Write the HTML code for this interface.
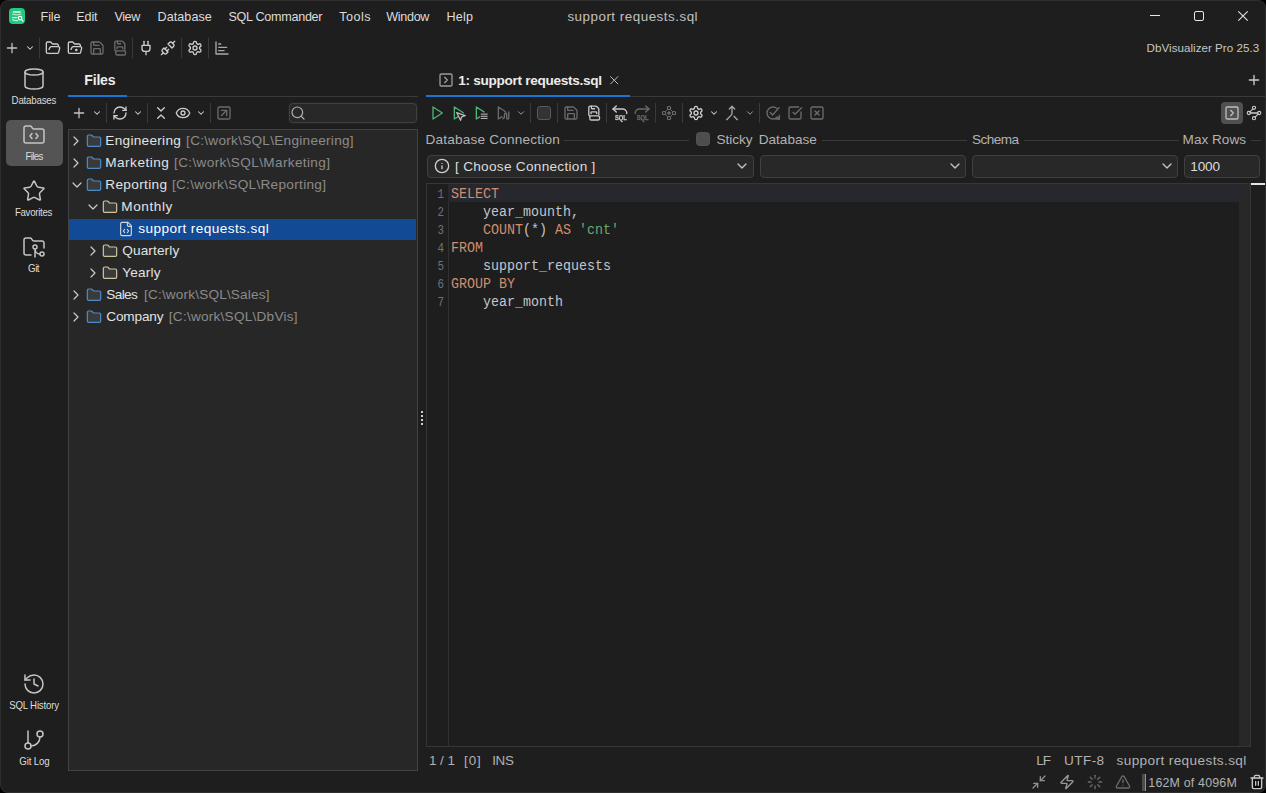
<!DOCTYPE html>
<html>
<head>
<meta charset="utf-8">
<title>support requests.sql</title>
<style>
*{box-sizing:border-box;margin:0;padding:0}
html,body{width:1266px;height:793px;overflow:hidden;background:#000}
body{font-family:"Liberation Sans",sans-serif;font-size:13px;color:#dcdcdc;position:relative}
#win{position:absolute;left:0;top:0;width:1266px;height:793px;background:#1e1e1e;border-radius:8px;overflow:hidden}
#frame{position:absolute;left:0;top:0;width:1266px;height:793px;border:1px solid #2e2e2e;border-radius:8px;pointer-events:none}
.a{position:absolute}
.t{position:absolute;white-space:nowrap;line-height:16px;height:16px}
svg{position:absolute;overflow:visible}
.code{position:absolute;left:451px;height:18px;transform:scaleY(1.1);transform-origin:0 12.55px;font-family:"Liberation Mono",monospace;font-size:13.33px;line-height:18px;white-space:pre}
.ln{position:absolute;left:428px;width:16px;height:18px;text-align:right;font-family:"Liberation Mono",monospace;font-size:12.6px;line-height:18px;color:#6f737a;transform:scaleX(.86);transform-origin:100% 50%}
</style>
</head>
<body>
<div id="win">
<!-- title bar -->
<div class="a" style="left:9px;top:8px;width:16px;height:16px;border-radius:4px;background:#23c881"></div>
<svg style="left:9px;top:8px" width="16" height="16" viewBox="0 0 16 16" fill="none" stroke="#fff" stroke-linecap="round"><path d="M4.500 4.100h6.700" stroke-width="1.500" stroke="#e6fcf2"/><path d="M3.600 6.200q4.200 1.700 8.400 0" stroke-width="1" stroke="#bff3dc"/><path d="M3.600 9.600h4.300" stroke-width="1.100" stroke="#d9f9ea"/><path d="M3.600 11.700q2.300 1.100 5.200 .9" stroke-width="1.100" stroke="#c4f4de"/><circle cx="11.100" cy="10.100" r="1.750" stroke-width="1.100"/><path d="M12.500 11.500l1.500 1.700" stroke-width="1.200"/></svg>
<div class="t" id="m_file" style="left:40.50px;top:8.63px;font-size:12.6px;color:#dcdcdc;letter-spacing:-0.063px;">File</div>
<div class="t" id="m_edit" style="left:76.30px;top:8.63px;font-size:12.6px;color:#dcdcdc;letter-spacing:-0.134px;">Edit</div>
<div class="t" id="m_view" style="left:114.40px;top:8.63px;font-size:12.6px;color:#dcdcdc;letter-spacing:-0.391px;">View</div>
<div class="t" id="m_db" style="left:157.60px;top:8.63px;font-size:12.6px;color:#dcdcdc;letter-spacing:0.042px;">Database</div>
<div class="t" id="m_sql" style="left:228.40px;top:8.63px;font-size:12.6px;color:#dcdcdc;letter-spacing:-0.283px;">SQL Commander</div>
<div class="t" id="m_tools" style="left:339.30px;top:8.63px;font-size:12.6px;color:#dcdcdc;letter-spacing:0.449px;">Tools</div>
<div class="t" id="m_win" style="left:386.30px;top:8.63px;font-size:12.6px;color:#dcdcdc;letter-spacing:-0.339px;">Window</div>
<div class="t" id="m_help" style="left:446.40px;top:8.63px;font-size:12.6px;color:#dcdcdc;letter-spacing:0.201px;">Help</div>
<div class="t" id="title" style="left:567.40px;top:9.36px;font-size:13.4px;color:#c2c2c2;letter-spacing:0.505px;">support requests.sql</div>
<div class="a" style="left:1150px;top:15px;width:10px;height:1px;background:#e8e8e8"></div>
<div class="a" style="left:1194px;top:11px;width:10px;height:10px;border:1px solid #e8e8e8;border-radius:2px"></div>
<svg style="left:1238px;top:11px" width="10" height="10" viewBox="0 0 10 10"><path d="M.3 .3l9.400 9.400M9.700 .3l-9.400 9.400" stroke="#e8e8e8" stroke-width="1.050" fill="none"/></svg>
<div class="t" id="ver" style="left:1146.60px;top:39.98px;font-size:11.6px;color:#c6c6c6;letter-spacing:0.031px;">DbVisualizer Pro 25.3</div>
<!-- main toolbar -->
<svg style="left:4px;top:40px;color:#c4c4c4" width="16" height="16" viewBox="0 0 24 24" fill="none" stroke="#c4c4c4" stroke-width="1.9" stroke-linecap="round" stroke-linejoin="round"><path d="M5 12h14M12 5v14"/></svg>
<svg style="left:25px;top:42.6px;color:#d4d4d4" width="10" height="10" viewBox="0 0 24 24" fill="none" stroke="#d4d4d4" stroke-width="2.5" stroke-linecap="round" stroke-linejoin="round"><path d="m6 9 6 6 6-6"/></svg>
<div class="a" style="left:39px;top:38px;width:1px;height:20px;background:#3a3a3a;"></div>
<svg style="left:45px;top:40px;color:#cdcdcd" width="16" height="16" viewBox="0 0 24 24" fill="none" stroke="#cdcdcd" stroke-width="2.0" stroke-linecap="round" stroke-linejoin="round"><path d="m6 14 1.5-2.9A2 2 0 0 1 9.24 10H20a2 2 0 0 1 1.94 2.5l-1.54 6a2 2 0 0 1-1.95 1.5H4a2 2 0 0 1-2-2V5a2 2 0 0 1 2-2h3.9a2 2 0 0 1 1.69.9l.81 1.2a2 2 0 0 0 1.67.9H18a2 2 0 0 1 2 2v2"/></svg>
<svg style="left:67px;top:40px;color:#cdcdcd" width="16" height="16" viewBox="0 0 24 24" fill="none" stroke="#cdcdcd" stroke-width="2.0" stroke-linecap="round" stroke-linejoin="round"><path d="m6 14 1.5-2.9A2 2 0 0 1 9.24 10H20a2 2 0 0 1 1.94 2.5l-1.54 6a2 2 0 0 1-1.95 1.5H4a2 2 0 0 1-2-2V5a2 2 0 0 1 2-2h3.9a2 2 0 0 1 1.69.9l.81 1.2a2 2 0 0 0 1.67.9H18a2 2 0 0 1 2 2v2"/><circle cx="14" cy="15" r="1"/></svg>
<svg style="left:89px;top:40px;color:#6b6b6b" width="16" height="16" viewBox="0 0 24 24" fill="none" stroke="#6b6b6b" stroke-width="2.0" stroke-linecap="round" stroke-linejoin="round"><path d="M15.2 3a2 2 0 0 1 1.4.6l3.8 3.8a2 2 0 0 1 .6 1.4V19a2 2 0 0 1-2 2H5a2 2 0 0 1-2-2V5a2 2 0 0 1 2-2z"/><path d="M17 21v-7a1 1 0 0 0-1-1H8a1 1 0 0 0-1 1v7"/><path d="M7 3v4a1 1 0 0 0 1 1h7"/></svg>
<svg style="left:112.1px;top:40px;color:#6b6b6b" width="16" height="16" viewBox="0 0 24 24" fill="none" stroke="#6b6b6b" stroke-width="2.0" stroke-linecap="round" stroke-linejoin="round"><path d="M6.200 16.500a2 2 0 0 1-2-2V3.600a2 2 0 0 1 2-2h8.400a2 2 0 0 1 1.400.600l2.600 2.600a2 2 0 0 1 .600 1.400v8.800"/><path d="M8 1.600v3a1 1 0 0 0 1 1h4"/><path d="M7.600 13v-1.600a1 1 0 0 1 1-1h6.400a1 1 0 0 1 1 1v1.600"/><rect x="5.700" y="16.300" width="14.600" height="6.200" rx="2.300"/></svg>
<div class="a" style="left:132px;top:38px;width:1px;height:20px;background:#3a3a3a;"></div>
<svg style="left:138px;top:40px;color:#cdcdcd" width="16" height="16" viewBox="0 0 24 24" fill="none" stroke="#cdcdcd" stroke-width="2.0" stroke-linecap="round" stroke-linejoin="round"><path d="M12 22v-5"/><path d="M9 8V2"/><path d="M15 8V2"/><path d="M18 8v5a4 4 0 0 1-4 4h-4a4 4 0 0 1-4-4V8Z"/></svg>
<svg style="left:160.3px;top:40px;color:#cdcdcd" width="16" height="16" viewBox="0 0 24 24" fill="none" stroke="#cdcdcd" stroke-width="2.0" stroke-linecap="round" stroke-linejoin="round"><path d="m19 5 3-3"/><path d="m2 22 3-3"/><path d="M6.3 20.3a2.4 2.4 0 0 0 3.4 0L12 18l-6-6-2.3 2.3a2.4 2.4 0 0 0 0 3.4Z"/><path d="M7.5 13.5 10 11"/><path d="M10.5 16.5 13 14"/><path d="m12 6 6 6 2.3-2.3a2.4 2.4 0 0 0 0-3.4l-2.6-2.6a2.4 2.4 0 0 0-3.4 0Z"/></svg>
<div class="a" style="left:181px;top:38px;width:1px;height:20px;background:#3a3a3a;"></div>
<svg style="left:187px;top:40px;color:#cdcdcd" width="16" height="16" viewBox="0 0 24 24" fill="none" stroke="#cdcdcd" stroke-width="2.0" stroke-linecap="round" stroke-linejoin="round"><path d="M12.22 2h-.44a2 2 0 0 0-2 2v.18a2 2 0 0 1-1 1.73l-.43.25a2 2 0 0 1-2 0l-.15-.08a2 2 0 0 0-2.73.73l-.22.38a2 2 0 0 0 .73 2.73l.15.1a2 2 0 0 1 1 1.72v.51a2 2 0 0 1-1 1.74l-.15.09a2 2 0 0 0-.73 2.73l.22.38a2 2 0 0 0 2.73.73l.15-.08a2 2 0 0 1 2 0l.43.25a2 2 0 0 1 1 1.73V20a2 2 0 0 0 2 2h.44a2 2 0 0 0 2-2v-.18a2 2 0 0 1 1-1.73l.43-.25a2 2 0 0 1 2 0l.15.08a2 2 0 0 0 2.73-.73l.22-.39a2 2 0 0 0-.73-2.73l-.15-.08a2 2 0 0 1-1-1.74v-.5a2 2 0 0 1 1-1.74l.15-.09a2 2 0 0 0 .73-2.73l-.22-.38a2 2 0 0 0-2.73-.73l-.15.08a2 2 0 0 1-2 0l-.43-.25a2 2 0 0 1-1-1.73V4a2 2 0 0 0-2-2z"/><circle cx="12" cy="12" r="3"/></svg>
<div class="a" style="left:208px;top:38px;width:1px;height:20px;background:#3a3a3a;"></div>
<svg style="left:213.7px;top:40px;color:#a9a9a9" width="16" height="16" viewBox="0 0 24 24" fill="none" stroke="#a9a9a9" stroke-width="2.0" stroke-linecap="round" stroke-linejoin="round"><path d="M3 3v18h18"/><path d="M7 16h8"/><path d="M7 11h12"/><path d="M7 6h3"/></svg>
<!-- sidebar -->
<div class="a" style="left:6px;top:120px;width:57px;height:46px;background:#545454;border-radius:5px"></div>
<svg style="left:22px;top:67px;color:#c4c4c4" width="24" height="24" viewBox="0 0 24 24" fill="none" stroke="#c4c4c4" stroke-width="1.5" stroke-linecap="round" stroke-linejoin="round"><ellipse cx="12" cy="5" rx="9" ry="3"/><path d="M3 5v14a9 3 0 0 0 18 0V5"/></svg>
<svg style="left:22px;top:123px;color:#c4c4c4" width="24" height="24" viewBox="0 0 24 24" fill="none" stroke="#c4c4c4" stroke-width="1.5" stroke-linecap="round" stroke-linejoin="round"><path d="M20 20a2 2 0 0 0 2-2V8a2 2 0 0 0-2-2h-7.9a2 2 0 0 1-1.69-.9L9.6 3.9A2 2 0 0 0 7.93 3H4a2 2 0 0 0-2 2v13a2 2 0 0 0 2 2Z"/><path d="M10 10.5 8 13l2 2.5"/><path d="m14 10.5 2 2.5-2 2.5"/></svg>
<svg style="left:22px;top:179px;color:#c4c4c4" width="24" height="24" viewBox="0 0 24 24" fill="none" stroke="#c4c4c4" stroke-width="1.5" stroke-linecap="round" stroke-linejoin="round"><path d="M11.525 2.295a.53.53 0 0 1 .95 0l2.31 4.679a2.123 2.123 0 0 0 1.595 1.16l5.166.756a.53.53 0 0 1 .294.904l-3.736 3.638a2.123 2.123 0 0 0-.611 1.878l.882 5.14a.53.53 0 0 1-.771.56l-4.618-2.428a2.122 2.122 0 0 0-1.973 0L6.396 21.01a.53.53 0 0 1-.77-.56l.881-5.139a2.122 2.122 0 0 0-.611-1.879L2.16 9.795a.53.53 0 0 1 .294-.906l5.165-.755a2.122 2.122 0 0 0 1.597-1.16z"/></svg>
<svg style="left:22px;top:235px;color:#c4c4c4" width="24" height="24" viewBox="0 0 24 24" fill="none" stroke="#c4c4c4" stroke-width="1.5" stroke-linecap="round" stroke-linejoin="round"><path d="M9 20H4a2 2 0 0 1-2-2V5a2 2 0 0 1 2-2h3.9a2 2 0 0 1 1.69.9l.81 1.2a2 2 0 0 0 1.67.9H20a2 2 0 0 1 2 2v5"/><circle cx="13" cy="12" r="2"/><path d="M18 19c-2.8 0-5-2.2-5-5v8"/><circle cx="20" cy="19" r="2"/></svg>
<svg style="left:22px;top:672px;color:#c4c4c4" width="24" height="24" viewBox="0 0 24 24" fill="none" stroke="#c4c4c4" stroke-width="1.5" stroke-linecap="round" stroke-linejoin="round"><path d="M3 12a9 9 0 1 0 9-9 9.75 9.75 0 0 0-6.74 2.74L3 8"/><path d="M3 3v5h5"/><path d="M12 7v5l4 2"/></svg>
<svg style="left:22px;top:728px;color:#c4c4c4" width="24" height="24" viewBox="0 0 24 24" fill="none" stroke="#c4c4c4" stroke-width="1.5" stroke-linecap="round" stroke-linejoin="round"><path d="M6 3v12"/><circle cx="18" cy="6" r="3"/><circle cx="6" cy="18" r="3"/><path d="M18 9a9 9 0 0 1-9 9"/></svg>
<div class="t" id="s_db" style="left:11.60px;top:92.64px;font-size:9.7px;color:#dcdcdc;letter-spacing:-0.196px;transform:scaleY(1.1);transform-origin:0 11.36px;">Databases</div>
<div class="t" id="s_files" style="left:25.40px;top:148.64px;font-size:9.7px;color:#dcdcdc;letter-spacing:-0.627px;transform:scaleY(1.1);transform-origin:0 11.36px;">Files</div>
<div class="t" id="s_fav" style="left:14.90px;top:204.64px;font-size:9.7px;color:#dcdcdc;letter-spacing:-0.287px;transform:scaleY(1.1);transform-origin:0 11.36px;">Favorites</div>
<div class="t" id="s_git" style="left:28.10px;top:260.64px;font-size:9.7px;color:#dcdcdc;letter-spacing:-0.494px;transform:scaleY(1.1);transform-origin:0 11.36px;">Git</div>
<div class="t" id="s_hist" style="left:9.20px;top:697.64px;font-size:9.7px;color:#dcdcdc;letter-spacing:-0.197px;transform:scaleY(1.1);transform-origin:0 11.36px;">SQL History</div>
<div class="t" id="s_log" style="left:19.30px;top:753.64px;font-size:9.7px;color:#dcdcdc;letter-spacing:-0.158px;transform:scaleY(1.1);transform-origin:0 11.36px;">Git Log</div>
<!-- files panel -->
<div class="t" id="f_tab" style="left:84.30px;top:72.15px;font-size:14px;color:#ececec;letter-spacing:-0.179px;font-weight:bold;">Files</div>
<div class="a" style="left:68px;top:96px;width:350px;height:1px;background:#3a3a3a;"></div>
<div class="a" style="left:68px;top:95px;width:59px;height:2px;background:#1c74d1;"></div>
<svg style="left:71px;top:105px;color:#c4c4c4" width="16" height="16" viewBox="0 0 24 24" fill="none" stroke="#c4c4c4" stroke-width="1.9" stroke-linecap="round" stroke-linejoin="round"><path d="M5 12h14M12 5v14"/></svg>
<svg style="left:92.1px;top:107.7px;color:#d4d4d4" width="10" height="10" viewBox="0 0 24 24" fill="none" stroke="#d4d4d4" stroke-width="2.5" stroke-linecap="round" stroke-linejoin="round"><path d="m6 9 6 6 6-6"/></svg>
<div class="a" style="left:106px;top:103px;width:1px;height:20px;background:#3a3a3a;"></div>
<svg style="left:112.2px;top:105px;color:#cdcdcd" width="16" height="16" viewBox="0 0 24 24" fill="none" stroke="#cdcdcd" stroke-width="2.0" stroke-linecap="round" stroke-linejoin="round"><path d="M3 12a9 9 0 0 1 9-9 9.75 9.75 0 0 1 6.74 2.74L21 8"/><path d="M21 3v5h-5"/><path d="M21 12a9 9 0 0 1-9 9 9.75 9.75 0 0 1-6.74-2.74L3 16"/><path d="M8 16H3v5"/></svg>
<svg style="left:133px;top:107.7px;color:#d4d4d4" width="10" height="10" viewBox="0 0 24 24" fill="none" stroke="#d4d4d4" stroke-width="2.5" stroke-linecap="round" stroke-linejoin="round"><path d="m6 9 6 6 6-6"/></svg>
<div class="a" style="left:147px;top:103px;width:1px;height:20px;background:#3a3a3a;"></div>
<svg style="left:152.9px;top:105px;color:#cdcdcd" width="16" height="16" viewBox="0 0 24 24" fill="none" stroke="#cdcdcd" stroke-width="2.0" stroke-linecap="round" stroke-linejoin="round"><path d="m7 20 5-5 5 5"/><path d="m7 4 5 5 5-5"/></svg>
<svg style="left:175.1px;top:105px;color:#cdcdcd" width="16" height="16" viewBox="0 0 24 24" fill="none" stroke="#cdcdcd" stroke-width="2.0" stroke-linecap="round" stroke-linejoin="round"><path d="M2.062 12.348a1 1 0 0 1 0-.696 10.75 10.75 0 0 1 19.876 0 1 1 0 0 1 0 .696 10.75 10.75 0 0 1-19.876 0"/><circle cx="12" cy="12" r="3"/></svg>
<svg style="left:195.9px;top:107.7px;color:#d4d4d4" width="10" height="10" viewBox="0 0 24 24" fill="none" stroke="#d4d4d4" stroke-width="2.5" stroke-linecap="round" stroke-linejoin="round"><path d="m6 9 6 6 6-6"/></svg>
<div class="a" style="left:210px;top:103px;width:1px;height:20px;background:#3a3a3a;"></div>
<svg style="left:216px;top:105px;color:#6b6b6b" width="16" height="16" viewBox="0 0 24 24" fill="none" stroke="#6b6b6b" stroke-width="2.0" stroke-linecap="round" stroke-linejoin="round"><rect width="18" height="18" x="3" y="3" rx="2"/><path d="M8 8h8v8"/><path d="m8 16 8-8"/></svg>
<div class="a" style="left:288px;top:102px;width:130px;height:22px;background:#242424;border-radius:4px"></div>
<div class="a" style="left:289px;top:103px;width:128px;height:20px;background:#282828;border:1px solid #404040;border-radius:4px"></div>
<svg style="left:290.3px;top:105px;color:#b0b0b0" width="16" height="16" viewBox="0 0 24 24" fill="none" stroke="#b0b0b0" stroke-width="1.8" stroke-linecap="round" stroke-linejoin="round"><circle cx="11" cy="11" r="8"/><path d="m21 21-4.3-4.3"/></svg>
<div class="a" style="left:68px;top:129px;width:350px;height:642px;background:#272727;border:1px solid #434343"></div>
<div class="a" style="left:69px;top:219px;width:347px;height:21px;background:#124a96;"></div>
<svg style="left:68.4px;top:133.4px;color:#cacaca" width="16" height="16" viewBox="0 0 24 24" fill="none" stroke="#cacaca" stroke-width="1.8" stroke-linecap="round" stroke-linejoin="round"><path d="m9 18 6-6-6-6"/></svg>
<svg style="left:86px;top:132.9px;color:#4d8ccc" width="16" height="16" viewBox="0 0 24 24" fill="#3a3a3a" stroke="#4d8ccc" stroke-width="1.8" stroke-linecap="round" stroke-linejoin="round"><path d="M20 20a2 2 0 0 0 2-2V8a2 2 0 0 0-2-2h-7.9a2 2 0 0 1-1.69-.9L9.6 3.9A2 2 0 0 0 7.93 3H4a2 2 0 0 0-2 2v13a2 2 0 0 0 2 2Z"/></svg>
<div class="t" id="t0" style="left:105.30px;top:132.69px;font-size:13.6px;color:#e2e2e2;letter-spacing:0.300px;">Engineering</div>
<div class="t" id="p0" style="left:186.10px;top:132.69px;font-size:13.6px;color:#8b8b8b;letter-spacing:0.273px;">[C:\work\SQL\Engineering]</div>
<svg style="left:68.4px;top:155.4px;color:#cacaca" width="16" height="16" viewBox="0 0 24 24" fill="none" stroke="#cacaca" stroke-width="1.8" stroke-linecap="round" stroke-linejoin="round"><path d="m9 18 6-6-6-6"/></svg>
<svg style="left:86px;top:154.9px;color:#4d8ccc" width="16" height="16" viewBox="0 0 24 24" fill="#3a3a3a" stroke="#4d8ccc" stroke-width="1.8" stroke-linecap="round" stroke-linejoin="round"><path d="M20 20a2 2 0 0 0 2-2V8a2 2 0 0 0-2-2h-7.9a2 2 0 0 1-1.69-.9L9.6 3.9A2 2 0 0 0 7.93 3H4a2 2 0 0 0-2 2v13a2 2 0 0 0 2 2Z"/></svg>
<div class="t" id="t1" style="left:105.30px;top:154.69px;font-size:13.6px;color:#e2e2e2;letter-spacing:0.472px;">Marketing</div>
<div class="t" id="p1" style="left:174.00px;top:154.69px;font-size:13.6px;color:#8b8b8b;letter-spacing:0.360px;">[C:\work\SQL\Marketing]</div>
<svg style="left:68.7px;top:177.4px;color:#cacaca" width="16" height="16" viewBox="0 0 24 24" fill="none" stroke="#cacaca" stroke-width="1.8" stroke-linecap="round" stroke-linejoin="round"><path d="m6 9 6 6 6-6"/></svg>
<svg style="left:86px;top:176.9px;color:#4d8ccc" width="16" height="16" viewBox="0 0 24 24" fill="#3a3a3a" stroke="#4d8ccc" stroke-width="1.8" stroke-linecap="round" stroke-linejoin="round"><path d="M20 20a2 2 0 0 0 2-2V8a2 2 0 0 0-2-2h-7.9a2 2 0 0 1-1.69-.9L9.6 3.9A2 2 0 0 0 7.93 3H4a2 2 0 0 0-2 2v13a2 2 0 0 0 2 2Z"/></svg>
<div class="t" id="t2" style="left:105.30px;top:176.69px;font-size:13.6px;color:#e2e2e2;letter-spacing:0.340px;">Reporting</div>
<div class="t" id="p2" style="left:171.90px;top:176.69px;font-size:13.6px;color:#8b8b8b;letter-spacing:0.307px;">[C:\work\SQL\Reporting]</div>
<svg style="left:84.7px;top:199.4px;color:#cacaca" width="16" height="16" viewBox="0 0 24 24" fill="none" stroke="#cacaca" stroke-width="1.8" stroke-linecap="round" stroke-linejoin="round"><path d="m6 9 6 6 6-6"/></svg>
<svg style="left:102px;top:198.9px;color:#cfc6a0" width="16" height="16" viewBox="0 0 24 24" fill="#3a3a3a" stroke="#cfc6a0" stroke-width="1.8" stroke-linecap="round" stroke-linejoin="round"><path d="M20 20a2 2 0 0 0 2-2V8a2 2 0 0 0-2-2h-7.9a2 2 0 0 1-1.69-.9L9.6 3.9A2 2 0 0 0 7.93 3H4a2 2 0 0 0-2 2v13a2 2 0 0 0 2 2Z"/></svg>
<div class="t" id="t3" style="left:121.30px;top:198.69px;font-size:13.6px;color:#e2e2e2;letter-spacing:0.566px;">Monthly</div>
<svg style="left:118.1px;top:220.6px;color:#d6d6d6" width="16" height="16" viewBox="0 0 24 24" fill="none" stroke="#d6d6d6" stroke-width="1.7" stroke-linecap="round" stroke-linejoin="round"><path d="M15 2H6a2 2 0 0 0-2 2v16a2 2 0 0 0 2 2h12a2 2 0 0 0 2-2V7Z"/><path d="M14 2v4a2 2 0 0 0 2 2h4"/><path d="M10 12.5 8 15l2 2.5"/><path d="m14 12.5 2 2.5-2 2.5"/></svg>
<div class="t" id="t4" style="left:138.30px;top:220.69px;font-size:13.6px;color:#ffffff;letter-spacing:0.422px;">support requests.sql</div>
<svg style="left:85.2px;top:243.4px;color:#cacaca" width="16" height="16" viewBox="0 0 24 24" fill="none" stroke="#cacaca" stroke-width="1.8" stroke-linecap="round" stroke-linejoin="round"><path d="m9 18 6-6-6-6"/></svg>
<svg style="left:102px;top:242.9px;color:#cfc6a0" width="16" height="16" viewBox="0 0 24 24" fill="#3a3a3a" stroke="#cfc6a0" stroke-width="1.8" stroke-linecap="round" stroke-linejoin="round"><path d="M20 20a2 2 0 0 0 2-2V8a2 2 0 0 0-2-2h-7.9a2 2 0 0 1-1.69-.9L9.6 3.9A2 2 0 0 0 7.93 3H4a2 2 0 0 0-2 2v13a2 2 0 0 0 2 2Z"/></svg>
<div class="t" id="t5" style="left:122.30px;top:242.69px;font-size:13.6px;color:#e2e2e2;letter-spacing:0.124px;">Quarterly</div>
<svg style="left:85.2px;top:265.4px;color:#cacaca" width="16" height="16" viewBox="0 0 24 24" fill="none" stroke="#cacaca" stroke-width="1.8" stroke-linecap="round" stroke-linejoin="round"><path d="m9 18 6-6-6-6"/></svg>
<svg style="left:102px;top:264.9px;color:#cfc6a0" width="16" height="16" viewBox="0 0 24 24" fill="#3a3a3a" stroke="#cfc6a0" stroke-width="1.8" stroke-linecap="round" stroke-linejoin="round"><path d="M20 20a2 2 0 0 0 2-2V8a2 2 0 0 0-2-2h-7.9a2 2 0 0 1-1.69-.9L9.6 3.9A2 2 0 0 0 7.93 3H4a2 2 0 0 0-2 2v13a2 2 0 0 0 2 2Z"/></svg>
<div class="t" id="t6" style="left:122.30px;top:264.69px;font-size:13.6px;color:#e2e2e2;letter-spacing:0.183px;">Yearly</div>
<svg style="left:68.4px;top:287.4px;color:#cacaca" width="16" height="16" viewBox="0 0 24 24" fill="none" stroke="#cacaca" stroke-width="1.8" stroke-linecap="round" stroke-linejoin="round"><path d="m9 18 6-6-6-6"/></svg>
<svg style="left:86px;top:286.9px;color:#4d8ccc" width="16" height="16" viewBox="0 0 24 24" fill="#3a3a3a" stroke="#4d8ccc" stroke-width="1.8" stroke-linecap="round" stroke-linejoin="round"><path d="M20 20a2 2 0 0 0 2-2V8a2 2 0 0 0-2-2h-7.9a2 2 0 0 1-1.69-.9L9.6 3.9A2 2 0 0 0 7.93 3H4a2 2 0 0 0-2 2v13a2 2 0 0 0 2 2Z"/></svg>
<div class="t" id="t7" style="left:106.30px;top:286.69px;font-size:13.6px;color:#e2e2e2;letter-spacing:-0.627px;">Sales</div>
<div class="t" id="p7" style="left:144.00px;top:286.69px;font-size:13.6px;color:#8b8b8b;letter-spacing:0.172px;">[C:\work\SQL\Sales]</div>
<svg style="left:68.4px;top:309.4px;color:#cacaca" width="16" height="16" viewBox="0 0 24 24" fill="none" stroke="#cacaca" stroke-width="1.8" stroke-linecap="round" stroke-linejoin="round"><path d="m9 18 6-6-6-6"/></svg>
<svg style="left:86px;top:308.9px;color:#4d8ccc" width="16" height="16" viewBox="0 0 24 24" fill="#3a3a3a" stroke="#4d8ccc" stroke-width="1.8" stroke-linecap="round" stroke-linejoin="round"><path d="M20 20a2 2 0 0 0 2-2V8a2 2 0 0 0-2-2h-7.9a2 2 0 0 1-1.69-.9L9.6 3.9A2 2 0 0 0 7.93 3H4a2 2 0 0 0-2 2v13a2 2 0 0 0 2 2Z"/></svg>
<div class="t" id="t8" style="left:106.30px;top:308.69px;font-size:13.6px;color:#e2e2e2;letter-spacing:-0.164px;">Company</div>
<div class="t" id="p8" style="left:168.80px;top:308.69px;font-size:13.6px;color:#8b8b8b;letter-spacing:0.243px;">[C:\work\SQL\DbVis]</div>
<div class="a" style="left:421px;top:411px;width:2px;height:2px;background:#cfcfcf;"></div>
<div class="a" style="left:421px;top:415px;width:2px;height:2px;background:#cfcfcf;"></div>
<div class="a" style="left:421px;top:419px;width:2px;height:2px;background:#cfcfcf;"></div>
<div class="a" style="left:421px;top:423px;width:2px;height:2px;background:#cfcfcf;"></div>
<!-- editor panel -->
<svg style="left:438px;top:72px;color:#9c9c9c" width="16" height="16" viewBox="0 0 24 24" fill="none" stroke="#9c9c9c" stroke-width="2.0" stroke-linecap="round" stroke-linejoin="round"><rect width="18" height="18" x="3" y="3" rx="2"/><path d="m10 8 4 4-4 4"/></svg>
<div class="t" id="e_tab" style="left:458.30px;top:72.89px;font-size:13.6px;color:#ececec;letter-spacing:-0.302px;font-weight:bold;">1: support requests.sql</div>
<svg style="left:607.1px;top:72.8px;color:#c4c4c4" width="14.5" height="14.5" viewBox="0 0 24 24" fill="none" stroke="#c4c4c4" stroke-width="1.6" stroke-linecap="round" stroke-linejoin="round"><path d="M18 6 6 18M6 6l12 12"/></svg>
<div class="a" style="left:426px;top:96px;width:840px;height:1px;background:#3a3a3a;"></div>
<div class="a" style="left:426px;top:95px;width:204px;height:2px;background:#1c74d1;"></div>
<svg style="left:1246px;top:72px;color:#cdcdcd" width="16" height="16" viewBox="0 0 24 24" fill="none" stroke="#cdcdcd" stroke-width="2.0" stroke-linecap="round" stroke-linejoin="round"><path d="M5 12h14M12 5v14"/></svg>
<svg style="left:428.7px;top:105px;color:#4bb37b" width="16" height="16" viewBox="0 0 24 24" fill="none" stroke="#4bb37b" stroke-width="2.0" stroke-linecap="round" stroke-linejoin="round"><path d="M6 3 20 12 6 21Z"/></svg>
<svg style="left:451px;top:105px" width="16" height="16" viewBox="0 0 24 24" fill="none" stroke-width="2" stroke-linecap="round" stroke-linejoin="round"><path d="M5 3v18l5-3.200M5 3l13.500 8.600" stroke="#4bb37b"/><path d="M8.500 11.300l12.800 4.700-5.300 1.700-1.700 5.300z" stroke="#bdbdbd" fill="#1e1e1e" stroke-width="1.900"/></svg>
<svg style="left:473px;top:105px" width="16" height="16" viewBox="0 0 24 24" fill="none" stroke-width="2" stroke-linecap="round" stroke-linejoin="round"><path d="M5 3v18l5-3.200M5 3l11.500 7.400" stroke="#4bb37b"/><path d="M12.300 13.700h9M12.300 16.900h9M12.300 20.100h9" stroke="#d2d2d2" stroke-width="1.350"/></svg>
<svg style="left:495px;top:105px" width="16" height="16" viewBox="0 0 24 24" fill="none" stroke="#6b6b6b" stroke-width="2" stroke-linecap="round" stroke-linejoin="round"><path d="M5 3v18l5.500-3.500M5 3l10.500 6.800"/><path d="M11.500 20.500c2.800 0 2.800-1.500 2.800-4v-3c0-2 3.200-2 3.200 0v6c0 2 3.200 2 3.200 0v-9"/></svg>
<svg style="left:516px;top:107.7px;color:#a8a8a8" width="10" height="10" viewBox="0 0 24 24" fill="none" stroke="#a8a8a8" stroke-width="2.2" stroke-linecap="round" stroke-linejoin="round"><path d="m6 9 6 6 6-6"/></svg>
<div class="a" style="left:530px;top:103px;width:1px;height:20px;background:#3a3a3a;"></div>
<div class="a" style="left:537px;top:106px;width:14px;height:14px;border:1.400px solid #585858;border-radius:3px;background:#333"></div>
<div class="a" style="left:557px;top:103px;width:1px;height:20px;background:#3a3a3a;"></div>
<svg style="left:563px;top:105px;color:#6b6b6b" width="16" height="16" viewBox="0 0 24 24" fill="none" stroke="#6b6b6b" stroke-width="2.0" stroke-linecap="round" stroke-linejoin="round"><path d="M15.2 3a2 2 0 0 1 1.4.6l3.8 3.8a2 2 0 0 1 .6 1.4V19a2 2 0 0 1-2 2H5a2 2 0 0 1-2-2V5a2 2 0 0 1 2-2z"/><path d="M17 21v-7a1 1 0 0 0-1-1H8a1 1 0 0 0-1 1v7"/><path d="M7 3v4a1 1 0 0 0 1 1h7"/></svg>
<svg style="left:586.1px;top:105px;color:#c9c9c9" width="16" height="16" viewBox="0 0 24 24" fill="none" stroke="#c9c9c9" stroke-width="2.0" stroke-linecap="round" stroke-linejoin="round"><path d="M6.200 16.500a2 2 0 0 1-2-2V3.600a2 2 0 0 1 2-2h8.400a2 2 0 0 1 1.400.600l2.600 2.600a2 2 0 0 1 .600 1.400v8.800"/><path d="M8 1.600v3a1 1 0 0 0 1 1h4"/><path d="M7.600 13v-1.600a1 1 0 0 1 1-1h6.400a1 1 0 0 1 1 1v1.600"/><rect x="5.700" y="16.300" width="14.600" height="6.200" rx="2.300"/></svg>
<div class="a" style="left:606px;top:103px;width:1px;height:20px;background:#3a3a3a;"></div>
<svg style="left:612.2px;top:105px;will-change:transform" width="16" height="16" viewBox="0 0 16 16" fill="none" stroke="#c9c9c9" stroke-width="1.350" stroke-linecap="round" stroke-linejoin="round"><g><path d="M4.300 .900 1 4l3.300 3.100"/><path d="M1 4h9.500a4.300 4.300 0 0 1 4.300 4.300v.3"/></g><text x="8.9" y="15.300" text-anchor="middle" font-family="Liberation Sans,sans-serif" font-weight="bold" font-size="7.300" stroke="#c9c9c9" stroke-width=".25" fill="#c9c9c9" textLength="12" lengthAdjust="spacingAndGlyphs">SQL</text></svg>
<svg style="left:634px;top:105px;will-change:transform" width="16" height="16" viewBox="0 0 16 16" fill="none" stroke="#6b6b6b" stroke-width="1.350" stroke-linecap="round" stroke-linejoin="round"><g transform="translate(16,0) scale(-1,1)"><path d="M4.300 .900 1 4l3.300 3.100"/><path d="M1 4h9.500a4.300 4.300 0 0 1 4.300 4.300v.3"/></g><text x="8.7" y="15.300" text-anchor="middle" font-family="Liberation Sans,sans-serif" font-weight="bold" font-size="7.300" stroke="#6b6b6b" stroke-width=".25" fill="#6b6b6b" textLength="12" lengthAdjust="spacingAndGlyphs">SQL</text></svg>
<div class="a" style="left:655px;top:103px;width:1px;height:20px;background:#3a3a3a;"></div>
<svg style="left:661px;top:105px;color:#6b6b6b" width="16" height="16" viewBox="0 0 24 24" fill="none" stroke="#6b6b6b" stroke-width="1.7" stroke-linecap="round" stroke-linejoin="round"><rect x="9.700" y="2.200" width="4.600" height="4.600" rx="1.400"/><rect x="9.700" y="17.200" width="4.600" height="4.600" rx="1.400"/><rect x="2.200" y="9.700" width="4.600" height="4.600" rx="1.400"/><rect x="17.200" y="9.700" width="4.600" height="4.600" rx="1.400"/><path d="M9.700 6.800l-2.900 2.900M14.300 6.800l2.900 2.900M9.700 17.200l-2.900-2.900M14.300 17.200l2.900-2.900" stroke-width="1.500"/><circle cx="12" cy="12" r="1.500" fill="currentColor"/><path d="M9.900 12h4.200M12 9.900v4.200" stroke-width="1.500"/></svg>
<div class="a" style="left:682px;top:103px;width:1px;height:20px;background:#3a3a3a;"></div>
<svg style="left:688px;top:105px;color:#cdcdcd" width="16" height="16" viewBox="0 0 24 24" fill="none" stroke="#cdcdcd" stroke-width="2.0" stroke-linecap="round" stroke-linejoin="round"><path d="M12.22 2h-.44a2 2 0 0 0-2 2v.18a2 2 0 0 1-1 1.73l-.43.25a2 2 0 0 1-2 0l-.15-.08a2 2 0 0 0-2.73.73l-.22.38a2 2 0 0 0 .73 2.73l.15.1a2 2 0 0 1 1 1.72v.51a2 2 0 0 1-1 1.74l-.15.09a2 2 0 0 0-.73 2.73l.22.38a2 2 0 0 0 2.73.73l.15-.08a2 2 0 0 1 2 0l.43.25a2 2 0 0 1 1 1.73V20a2 2 0 0 0 2 2h.44a2 2 0 0 0 2-2v-.18a2 2 0 0 1 1-1.73l.43-.25a2 2 0 0 1 2 0l.15.08a2 2 0 0 0 2.73-.73l.22-.39a2 2 0 0 0-.73-2.73l-.15-.08a2 2 0 0 1-1-1.74v-.5a2 2 0 0 1 1-1.74l.15-.09a2 2 0 0 0 .73-2.73l-.22-.38a2 2 0 0 0-2.73-.73l-.15.08a2 2 0 0 1-2 0l-.43-.25a2 2 0 0 1-1-1.73V4a2 2 0 0 0-2-2z"/><circle cx="12" cy="12" r="3"/></svg>
<svg style="left:709px;top:107.7px;color:#d4d4d4" width="10" height="10" viewBox="0 0 24 24" fill="none" stroke="#d4d4d4" stroke-width="2.5" stroke-linecap="round" stroke-linejoin="round"><path d="m6 9 6 6 6-6"/></svg>
<svg style="left:724px;top:105px;color:#a6a6a6" width="16" height="16" viewBox="0 0 24 24" fill="none" stroke="#a6a6a6" stroke-width="2.0" stroke-linecap="round" stroke-linejoin="round"><path d="m8 6 4-4 4 4"/><path d="M12 2v10.3a4 4 0 0 1-1.172 2.872L4 22"/><path d="m20 22-5-5"/></svg>
<svg style="left:745px;top:107.7px;color:#a8a8a8" width="10" height="10" viewBox="0 0 24 24" fill="none" stroke="#a8a8a8" stroke-width="2.2" stroke-linecap="round" stroke-linejoin="round"><path d="m6 9 6 6 6-6"/></svg>
<div class="a" style="left:759px;top:103px;width:1px;height:20px;background:#3a3a3a;"></div>
<svg style="left:765.4px;top:105px;color:#6b6b6b" width="16" height="16" viewBox="0 0 24 24" fill="none" stroke="#6b6b6b" stroke-width="2.0" stroke-linecap="round" stroke-linejoin="round"><path d="M17.900 5.200A9 9 0 1 0 18.700 18L21.500 21"/><path d="M21.500 15.500v5.500h-5.500"/><path d="m7.700 11.200 3.700 3.700 9.800-11"/></svg>
<svg style="left:787px;top:105px;color:#6b6b6b" width="16" height="16" viewBox="0 0 24 24" fill="none" stroke="#6b6b6b" stroke-width="2.0" stroke-linecap="round" stroke-linejoin="round"><path d="M21 10.5V19a2 2 0 0 1-2 2H5a2 2 0 0 1-2-2V5a2 2 0 0 1 2-2h12.5"/><path d="m9 11 3 3L22 4"/></svg>
<svg style="left:808.8px;top:105px;color:#6b6b6b" width="16" height="16" viewBox="0 0 24 24" fill="none" stroke="#6b6b6b" stroke-width="2.0" stroke-linecap="round" stroke-linejoin="round"><rect width="18" height="18" x="3" y="3" rx="2"/><path d="m15 9-6 6"/><path d="m9 9 6 6"/></svg>
<div class="a" style="left:1221px;top:102px;width:22px;height:22px;background:#505050;border-radius:4px"></div>
<svg style="left:1224px;top:105px;color:#bdbdbd" width="16" height="16" viewBox="0 0 24 24" fill="none" stroke="#bdbdbd" stroke-width="2.0" stroke-linecap="round" stroke-linejoin="round"><rect width="18" height="18" x="3" y="3" rx="2"/><path d="m10 8 4 4-4 4"/></svg>
<svg style="left:1246px;top:105px;color:#cdcdcd" width="16" height="16" viewBox="0 0 24 24" fill="none" stroke="#cdcdcd" stroke-width="1.6" stroke-linecap="round" stroke-linejoin="round"><circle cx="12" cy="4.200" r="2.400"/><circle cx="12" cy="19.800" r="2.400"/><circle cx="4.200" cy="12" r="2.400"/><circle cx="19.800" cy="12" r="2.400"/><path d="M6.600 12h10.800" stroke-width="2.600"/><path d="M5.900 10.300l4.400-4.400M18.100 13.700l-4.400 4.400"/></svg>
<div class="t" id="l_conn" style="left:425.60px;top:132.09px;font-size:13.6px;color:#b2b2b2;letter-spacing:0.196px;">Database Connection</div>
<div class="a" style="left:564px;top:140px;width:125px;height:1px;background:#3a3a3a;"></div>
<div class="a" style="left:696px;top:132px;width:14px;height:14px;background:#4e4e4e;border-radius:3.500px;border:1px solid #535353"></div>
<div class="t" id="l_sticky" style="left:716.60px;top:132.09px;font-size:13.6px;color:#b2b2b2;letter-spacing:-0.052px;">Sticky</div>
<div class="t" id="l_db" style="left:758.80px;top:132.09px;font-size:13.6px;color:#b2b2b2;letter-spacing:-0.033px;">Database</div>
<div class="a" style="left:822px;top:140px;width:145px;height:1px;background:#3a3a3a;"></div>
<div class="t" id="l_schema" style="left:971.90px;top:132.09px;font-size:13.6px;color:#b2b2b2;letter-spacing:-0.542px;">Schema</div>
<div class="a" style="left:1024px;top:140px;width:155px;height:1px;background:#3a3a3a;"></div>
<div class="t" id="l_max" style="left:1182.60px;top:132.09px;font-size:13.6px;color:#b2b2b2;letter-spacing:-0.007px;">Max Rows</div>
<div class="a" style="left:1251px;top:140px;width:10px;height:1px;background:#3a3a3a;"></div>
<div class="a" style="left:427px;top:155px;width:327px;height:23px;background:#282828;border:1px solid #404040;border-radius:4px"></div>
<div class="a" style="left:760px;top:155px;width:206px;height:23px;background:#282828;border:1px solid #404040;border-radius:4px"></div>
<div class="a" style="left:972px;top:155px;width:206px;height:23px;background:#282828;border:1px solid #404040;border-radius:4px"></div>
<div class="a" style="left:1184px;top:155px;width:76px;height:23px;background:#282828;border:1px solid #404040;border-radius:4px"></div>
<svg style="left:434px;top:158px;color:#d0d0d0" width="16" height="16" viewBox="0 0 24 24" fill="none" stroke="#d0d0d0" stroke-width="2.0" stroke-linecap="round" stroke-linejoin="round"><circle cx="12" cy="12" r="10"/><path d="M12 16v-4"/><path d="M12 8h.01"/></svg>
<div class="t" id="c_choose" style="left:455.00px;top:158.89px;font-size:13.6px;color:#dcdcdc;letter-spacing:0.293px;">[ Choose Connection ]</div>
<svg style="left:734.2px;top:158px;color:#c8c8c8" width="16" height="16" viewBox="0 0 24 24" fill="none" stroke="#c8c8c8" stroke-width="1.9" stroke-linecap="round" stroke-linejoin="round"><path d="m6 9 6 6 6-6"/></svg>
<svg style="left:946.5px;top:158px;color:#c8c8c8" width="16" height="16" viewBox="0 0 24 24" fill="none" stroke="#c8c8c8" stroke-width="1.9" stroke-linecap="round" stroke-linejoin="round"><path d="m6 9 6 6 6-6"/></svg>
<svg style="left:1158.5px;top:158px;color:#c8c8c8" width="16" height="16" viewBox="0 0 24 24" fill="none" stroke="#c8c8c8" stroke-width="1.9" stroke-linecap="round" stroke-linejoin="round"><path d="m6 9 6 6 6-6"/></svg>
<div class="t" id="c_1000" style="left:1190.30px;top:158.89px;font-size:13.6px;color:#dcdcdc;letter-spacing:-0.194px;">1000</div>
<div class="a" style="left:426px;top:183px;width:825px;height:1px;background:#363636;"></div>
<div class="a" style="left:426px;top:183px;width:1px;height:564px;background:#363636;"></div>
<div class="a" style="left:426px;top:746px;width:825px;height:1px;background:#363636;"></div>
<div class="a" style="left:448px;top:184px;width:1px;height:562px;background:#313131;"></div>
<div class="a" style="left:448px;top:184px;width:791px;height:18px;background:#26282e;"></div>
<div class="a" style="left:1239px;top:184px;width:11px;height:562px;background:#282828;"></div>
<div class="a" style="left:1250px;top:184px;width:1px;height:562px;background:#363636;"></div>
<div class="a" style="left:1251px;top:183px;width:15px;height:2px;background:#e4e4ec;"></div>
<div class="code" style="top:186px"><span style="color:#cf8e6d">SELECT</span></div>
<div class="ln" style="top:186px">1</div>
<div class="code" style="top:204px"><span style="color:#c4c6cc">    year_mounth,</span></div>
<div class="ln" style="top:204px">2</div>
<div class="code" style="top:222px"><span style="color:#c4c6cc">    </span><span style="color:#cf8e6d">COUNT</span><span style="color:#c4c6cc">(*) </span><span style="color:#cf8e6d">AS</span><span style="color:#c4c6cc"> </span><span style="color:#6aab73">&#x27;cnt&#x27;</span></div>
<div class="ln" style="top:222px">3</div>
<div class="code" style="top:240px"><span style="color:#cf8e6d">FROM</span></div>
<div class="ln" style="top:240px">4</div>
<div class="code" style="top:258px"><span style="color:#c4c6cc">    support_requests</span></div>
<div class="ln" style="top:258px">5</div>
<div class="code" style="top:276px"><span style="color:#cf8e6d">GROUP BY</span></div>
<div class="ln" style="top:276px">6</div>
<div class="code" style="top:294px"><span style="color:#c4c6cc">    year_month</span></div>
<div class="ln" style="top:294px">7</div>
<div class="t" id="st_pos" style="left:429.00px;top:752.66px;font-size:13.4px;color:#b2b2b2;letter-spacing:-0.027px;">1 / 1</div>
<div class="t" id="st_sel" style="left:464.10px;top:752.66px;font-size:13.4px;color:#b2b2b2;letter-spacing:0.916px;">[0]</div>
<div class="t" id="st_ins" style="left:492.20px;top:752.66px;font-size:13.4px;color:#b2b2b2;letter-spacing:-0.345px;">INS</div>
<div class="t" id="st_lf" style="left:1036.20px;top:752.59px;font-size:13.6px;color:#b2b2b2;letter-spacing:-0.960px;">LF</div>
<div class="t" id="st_utf" style="left:1063.90px;top:752.59px;font-size:13.6px;color:#b2b2b2;letter-spacing:0.437px;">UTF-8</div>
<div class="t" id="st_file" style="left:1116.50px;top:752.59px;font-size:13.6px;color:#b2b2b2;letter-spacing:0.390px;">support requests.sql</div>
<svg style="left:1030.7px;top:774px;color:#8f8f8f" width="16" height="16" viewBox="0 0 24 24" fill="none" stroke="#8f8f8f" stroke-width="2.0" stroke-linecap="round" stroke-linejoin="round"><path d="M4 14h6v6"/><path d="M20 10h-6V4"/><path d="m14 10 7-7"/><path d="m3 21 7-7"/></svg>
<svg style="left:1059px;top:774px;color:#989898" width="16" height="16" viewBox="0 0 24 24" fill="none" stroke="#989898" stroke-width="2.0" stroke-linecap="round" stroke-linejoin="round"><path d="M4 14a1 1 0 0 1-.78-1.63l9.9-10.2a.5.5 0 0 1 .86.46l-1.92 6.02A1 1 0 0 0 13 10h7a1 1 0 0 1 .78 1.63l-9.9 10.2a.5.5 0 0 1-.86-.46l1.92-6.02A1 1 0 0 0 11 14z"/></svg>
<svg style="left:1087px;top:774px;color:#6b6b6b" width="16" height="16" viewBox="0 0 24 24" fill="none" stroke="#6b6b6b" stroke-width="2.0" stroke-linecap="round" stroke-linejoin="round"><path d="M12 2v4"/><path d="m16.200 7.800 2.900-2.900"/><path d="M18 12h4"/><path d="m16.200 16.200 2.900 2.900"/><path d="M12 18v4"/><path d="m4.900 19.100 2.900-2.900"/><path d="M2 12h4"/><path d="m4.900 4.900 2.900 2.900"/></svg>
<svg style="left:1115px;top:774px;color:#6b6b6b" width="16" height="16" viewBox="0 0 24 24" fill="none" stroke="#6b6b6b" stroke-width="2.0" stroke-linecap="round" stroke-linejoin="round"><path d="m21.730 18-8-14a2 2 0 0 0-3.480 0l-8 14A2 2 0 0 0 4 21h16a2 2 0 0 0 1.730-3"/><path d="M12 9v4"/><path d="M12 17h.01"/></svg>
<div class="a" style="left:1142px;top:774px;width:3px;height:17px;background:#4c4c4c;"></div>
<div class="a" style="left:1145px;top:774px;width:1px;height:17px;background:#909090;"></div>
<div class="t" id="mem" style="left:1148.30px;top:775.10px;font-size:12.4px;color:#b2b2b2;letter-spacing:0.194px;">162M of 4096M</div>
<svg style="left:1248.8px;top:774px;color:#c6c6c6" width="16" height="16" viewBox="0 0 24 24" fill="none" stroke="#c6c6c6" stroke-width="2.0" stroke-linecap="round" stroke-linejoin="round"><path d="M3 6h18"/><path d="M19 6v14c0 1-1 2-2 2H7c-1 0-2-1-2-2V6"/><path d="M8 6V4c0-1 1-2 2-2h4c1 0 2 1 2 2v2"/><path d="M10 11v6"/><path d="M14 11v6"/></svg>
<div class="a" style="left:1253.600px;top:779.600px;width:6.400px;height:8px;background:#000"></div>
<svg style="left:1248.800px;top:774px" width="16" height="16" viewBox="0 0 24 24" fill="none" stroke="#c6c6c6" stroke-width="2" stroke-linecap="round"><path d="M10 11v6M14 11v6"/></svg>
<div id="frame"></div>
</div>
</body>
</html>
